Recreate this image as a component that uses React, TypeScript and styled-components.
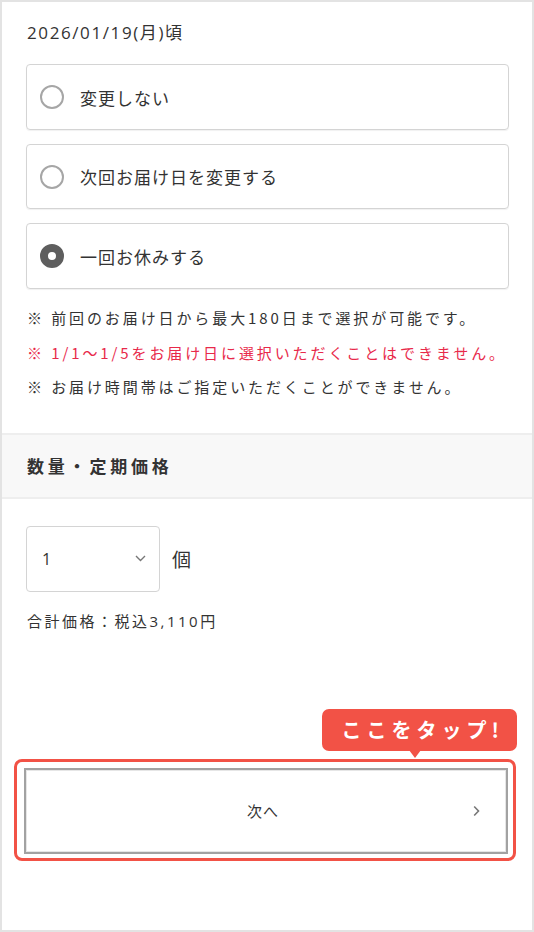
import React from "react";
import styled, { createGlobalStyle } from "styled-components";

const Global = createGlobalStyle`
  html, body { margin: 0; padding: 0; background: #fff; }
  body { font-family: "Open Sans", "Noto Sans CJK JP", sans-serif; color: #333; }
  * { box-sizing: border-box; }
`;

const Frame = styled.div`
  width: 534px;
  height: 932px;
  border: 2px solid #e3e3e3;
  background: #fff;
  display: flex;
  flex-direction: column;
  overflow: hidden;
`;

const Section = styled.div`
  padding: 0 23px 0 24px;
  display: flex;
  flex-direction: column;
`;

const DateText = styled.div`
  font-size: 17px;
  line-height: 24px;
  letter-spacing: 1.6px;
  color: #333;
  margin-top: 19px;
  margin-left: 1px;
`;

const Options = styled.div`
  margin-top: 19px;
  display: flex;
  flex-direction: column;
  gap: 14px;
`;

const Option = styled.label<{ $h: number }>`
  height: ${(p) => p.$h}px;
  border: 1px solid #d4d4d4;
  border-radius: 4px;
  box-shadow: 0 1px 1px rgba(0, 0, 0, 0.06);
  display: flex;
  align-items: center;
  padding-left: 13px;
  gap: 16px;
  font-size: 17px;
  letter-spacing: 1px;
  color: #333;
  font-family: "Noto Sans CJK JP", sans-serif;
`;

const Radio = styled.span<{ $checked?: boolean }>`
  width: 24px;
  height: 24px;
  border-radius: 50%;
  flex: none;
  border: ${(p) => (p.$checked ? "8px solid #5e5e5e" : "2px solid #a6a6a6")};
  background: #fff;
`;

const Notes = styled.div`
  margin-top: 12px;
  margin-left: 1px;
  display: flex;
  flex-direction: column;
`;

const Note = styled.div<{ $red?: boolean }>`
  font-size: 15px;
  line-height: 34.5px;
  color: ${(p) => (p.$red ? "#e8294a" : "#333")};
  font-family: "Noto Sans CJK JP", sans-serif;
  letter-spacing: 2.9px;
  white-space: nowrap;
`;

const Band = styled.div`
  margin-top: 28px;
  height: 66px;
  background: #f8f8f8;
  border-top: 2px solid #eeeeee;
  border-bottom: 2px solid #eeeeee;
  display: flex;
  align-items: center;
  padding-left: 25px;
  font-size: 17px;
  letter-spacing: 3.8px;
  font-weight: bold;
  color: #333;
  font-family: "Noto Sans CJK JP", sans-serif;
`;

const QtyRow = styled.div`
  margin-top: 27px;
  display: flex;
  align-items: center;
  gap: 12px;
`;

const Select = styled.div`
  width: 134px;
  height: 66px;
  border: 1px solid #d4d4d4;
  border-radius: 4px;
  display: flex;
  align-items: center;
  justify-content: space-between;
  padding: 0 13px 0 15px;
  font-size: 16px;
  color: #333;
`;

const Unit = styled.span`
  font-size: 19px;
  color: #333;
  font-family: "Noto Sans CJK JP", sans-serif;
`;

const Total = styled.div`
  margin-top: 19px;
  margin-left: 1px;
  font-size: 15px;
  line-height: 20px;
  letter-spacing: 2.5px;
  color: #333;
  font-family: "Open Sans", "Noto Sans CJK JP", sans-serif;
`;

const CtaWrap = styled.div`
  margin: 128px 16px 0 12px;
  position: relative;
`;

const Bubble = styled.div`
  position: absolute;
  right: -1px;
  top: -50px;
  height: 42px;
  padding: 0 13px 0 20px;
  background: #f25246;
  color: #fff;
  border-radius: 7px;
  font-size: 20px;
  font-weight: bold;
  letter-spacing: 5px;
  display: flex;
  align-items: center;
  font-family: "Noto Sans CJK JP", sans-serif;
  &::after {
    content: "";
    position: absolute;
    bottom: -7px;
    right: 96px;
    border-left: 6px solid transparent;
    border-right: 6px solid transparent;
    border-top: 8px solid #f25246;
  }
`;

const Outline = styled.div`
  border: 3px solid #f25246;
  border-radius: 8px;
  padding: 6px 5px 4px 7px;
`;

const NextButton = styled.button`
  width: 100%;
  height: 86px;
  background: #fff;
  border: 2px solid #a2a2a2;
  box-shadow: inset 0 0 0 1px #e6e6e6;
  position: relative;
  display: flex;
  align-items: center;
  justify-content: center;
  font-size: 15px;
  letter-spacing: 1px;
  color: #333;
  font-family: "Noto Sans CJK JP", sans-serif;
  padding: 0 6px 0 0;
  cursor: pointer;
`;

const NextChevron = styled.span`
  position: absolute;
  right: 26px;
  top: 50%;
  transform: translateY(-50%);
  display: flex;
`;

export default function App() {
  return (
    <>
      <Global />
      <Frame>
        <Section>
          <DateText>2026/01/19(月)頃</DateText>
          <Options>
            <Option $h={66}>
              <Radio />
              変更しない
            </Option>
            <Option $h={65}>
              <Radio />
              次回お届け日を変更する
            </Option>
            <Option $h={66}>
              <Radio $checked />
              一回お休みする
            </Option>
          </Options>
          <Notes>
            <Note>※ 前回のお届け日から最大180日まで選択が可能です。</Note>
            <Note $red>※ 1/1〜1/5をお届け日に選択いただくことはできません。</Note>
            <Note>※ お届け時間帯はご指定いただくことができません。</Note>
          </Notes>
        </Section>
        <Band>数量・定期価格</Band>
        <Section>
          <QtyRow>
            <Select>
              <span>1</span>
              <svg width="11" height="7" viewBox="0 0 11 7" fill="none">
                <path d="M1 1l4.5 4.5L10 1" stroke="#777" strokeWidth="1.4" />
              </svg>
            </Select>
            <Unit>個</Unit>
          </QtyRow>
          <Total>合計価格：税込3,110円</Total>
        </Section>
        <CtaWrap>
          <Bubble>ここをタップ!</Bubble>
          <Outline>
            <NextButton>
              次へ
              <NextChevron>
                <svg width="7" height="11" viewBox="0 0 7 11" fill="none">
                  <path d="M1.2 1l4.3 4.5L1.2 10" stroke="#777" strokeWidth="1.6" />
                </svg>
              </NextChevron>
            </NextButton>
          </Outline>
        </CtaWrap>
      </Frame>
    </>
  );
}
